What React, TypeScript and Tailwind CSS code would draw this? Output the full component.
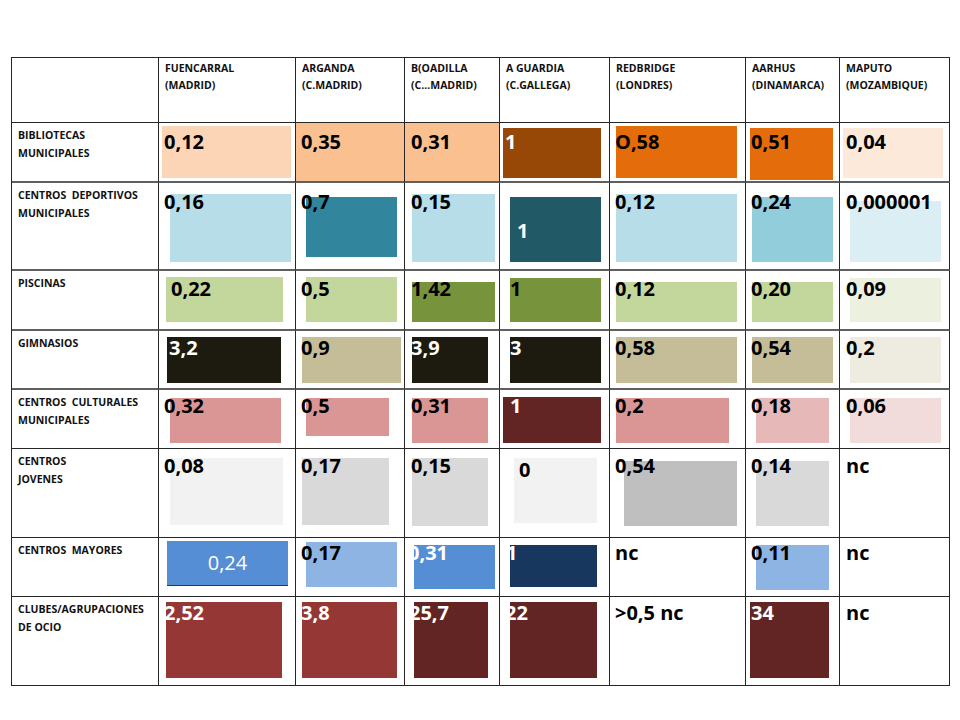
import React from 'react';

type Cell = {
  t: string;
  b?: string;
  w?: boolean;
  at?: string;
  centered?: boolean;
};

type Row = {
  label: string[];
  top: string;
  line: string;
  cells: Cell[];
};

const heads = [
  ['FUENCARRAL', '(MADRID)'],
  ['ARGANDA', '(C.MADRID)'],
  ['B(OADILLA', '(C…MADRID)'],
  ['A GUARDIA', '(C.GALLEGA)'],
  ['REDBRIDGE', '(LONDRES)'],
  ['AARHUS', '(DINAMARCA)'],
  ['MAPUTO', '(MOZAMBIQUE)'],
];

// default left offset of the number, per city column
const lefts = ['left-[5px]', 'left-[5px]', 'left-[6px]', 'left-[5px]', 'left-[5px]', 'left-[5px]', 'left-[6px]'];

const rows: Row[] = [
  {
    label: ['BIBLIOTECAS', 'MUNICIPALES'],
    top: 'top-[7px]',
    line: 'border-b-2 border-b-[#5f5f5f]',
    cells: [
      { t: '0,12', b: 'ml-[3px] mt-[3px] h-[52px] w-[129px] bg-[#fbd5b5]' },
      { t: '0,35', b: 'h-full w-full bg-[#fac090]' },
      { t: '0,31', b: 'h-full w-full bg-[#fac090]' },
      { t: '1', w: true, b: 'ml-[3px] mt-[5px] h-[50px] w-[98px] bg-[#974806]' },
      { t: 'O,58', b: 'ml-[6px] mt-[3px] h-[52px] w-[121px] bg-[#e46c0a]' },
      { t: '0,51', b: 'ml-[4px] mt-[5px] h-[52px] w-[83px] bg-[#e46c0a]' },
      { t: '0,04', b: 'ml-[3px] mt-[5px] h-[50px] w-[100px] bg-[#fde9d9]' },
    ],
  },
  {
    label: ['CENTROS\u00a0 DEPORTIVOS', 'MUNICIPALES'],
    top: 'top-[7px]',
    line: 'border-b-2 border-b-[#5f5f5f]',
    cells: [
      { t: '0,16', b: 'ml-[11px] mt-[11px] h-[68px] w-[121px] bg-[#b7dde8]' },
      { t: '0,7', b: 'ml-[10px] mt-[14px] h-[60px] w-[91px] bg-[#31859c]' },
      { t: '0,15', b: 'ml-[7px] mt-[11px] h-[68px] w-[83px] bg-[#b7dde8]' },
      { t: '1', w: true, at: 'left-[17px] top-[36px]', b: 'ml-[10px] mt-[14px] h-[65px] w-[91px] bg-[#215967]' },
      { t: '0,12', b: 'ml-[6px] mt-[11px] h-[68px] w-[121px] bg-[#b7dde8]' },
      { t: '0,24', b: 'ml-[6px] mt-[14px] h-[65px] w-[81px] bg-[#92cddc]' },
      { t: '0,000001', b: 'ml-[10px] mt-[18px] h-[61px] w-[91px] bg-[#daeef3]' },
    ],
  },
  {
    label: ['PISCINAS'],
    top: 'top-[6px]',
    line: 'border-b-2 border-b-[#5f5f5f]',
    cells: [
      { t: '0,22', at: 'left-[12px] top-[6px]', b: 'ml-[7px] mt-[6px] h-[45px] w-[117px] bg-[#c3d69b]' },
      { t: '0,5', b: 'ml-[10px] mt-[6px] h-[45px] w-[91px] bg-[#c3d69b]' },
      { t: '1,42', b: 'ml-[7px] mt-[11px] h-[40px] w-[83px] bg-[#77933c]' },
      { t: '1', at: 'left-[10px] top-[6px]', b: 'ml-[10px] mt-[7px] h-[44px] w-[91px] bg-[#77933c]' },
      { t: '0,12', b: 'ml-[6px] mt-[11px] h-[40px] w-[121px] bg-[#c3d69b]' },
      { t: '0,20', b: 'ml-[6px] mt-[11px] h-[40px] w-[81px] bg-[#c3d69b]' },
      { t: '0,09', b: 'ml-[10px] mt-[7px] h-[44px] w-[91px] bg-[#ebf1de]' },
    ],
  },
  {
    label: ['GIMNASIOS'],
    top: 'top-[5px]',
    line: 'border-b-2 border-b-[#5f5f5f]',
    cells: [
      { t: '3,2', w: true, at: 'left-[10px] top-[5px]', b: 'ml-[8px] mt-[6px] h-[46px] w-[114px] bg-[#1d1b10]' },
      { t: '0,9', b: 'ml-[6px] mt-[6px] h-[46px] w-[99px] bg-[#c4bd97]' },
      { t: '3,9', w: true, b: 'ml-[7px] mt-[6px] h-[46px] w-[76px] bg-[#1d1b10]' },
      { t: '3', w: true, at: 'left-[10px] top-[5px]', b: 'ml-[10px] mt-[6px] h-[46px] w-[91px] bg-[#1d1b10]' },
      { t: '0,58', b: 'ml-[6px] mt-[6px] h-[46px] w-[121px] bg-[#c4bd97]' },
      { t: '0,54', b: 'ml-[6px] mt-[6px] h-[46px] w-[81px] bg-[#c4bd97]' },
      { t: '0,2', b: 'ml-[10px] mt-[6px] h-[46px] w-[91px] bg-[#eeece1]' },
    ],
  },
  {
    label: ['CENTROS\u00a0 CULTURALES', 'MUNICIPALES'],
    top: 'top-[4px]',
    line: 'border-b border-b-[#262626]',
    cells: [
      { t: '0,32', b: 'ml-[11px] mt-[8px] h-[45px] w-[111px] bg-[#d99694]' },
      { t: '0,5', b: 'ml-[10px] mt-[8px] h-[38px] w-[83px] bg-[#d99694]' },
      { t: '0,31', b: 'ml-[7px] mt-[8px] h-[45px] w-[76px] bg-[#d99694]' },
      { t: '1', w: true, at: 'left-[10px] top-[4px]', b: 'ml-[3px] mt-[7px] h-[46px] w-[98px] bg-[#632523]' },
      { t: '0,2', b: 'ml-[6px] mt-[8px] h-[45px] w-[113px] bg-[#d99694]' },
      { t: '0,18', b: 'ml-[10px] mt-[8px] h-[45px] w-[73px] bg-[#e6b9b8]' },
      { t: '0,06', b: 'ml-[10px] mt-[8px] h-[45px] w-[91px] bg-[#f2dcdb]' },
    ],
  },
  {
    label: ['CENTROS', 'JOVENES'],
    top: 'top-[5px]',
    line: 'border-b border-b-[#262626]',
    cells: [
      { t: '0,08', b: 'ml-[11px] mt-[9px] h-[67px] w-[113px] bg-[#f2f2f2]' },
      { t: '0,17', b: 'ml-[6px] mt-[9px] h-[67px] w-[87px] bg-[#d9d9d9]' },
      { t: '0,15', b: 'ml-[7px] mt-[9px] h-[68px] w-[76px] bg-[#d9d9d9]' },
      { t: '0', at: 'left-[19px] top-[9px]', b: 'ml-[14px] mt-[9px] h-[65px] w-[83px] bg-[#f2f2f2]' },
      { t: '0,54', b: 'ml-[14px] mt-[12px] h-[65px] w-[113px] bg-[#bfbfbf]' },
      { t: '0,14', b: 'ml-[10px] mt-[12px] h-[65px] w-[73px] bg-[#d9d9d9]' },
      { t: 'nc' },
    ],
  },
  {
    label: ['CENTROS\u00a0 MAYORES'],
    top: 'top-[3px]',
    line: 'border-b border-b-[#262626]',
    cells: [
      { t: '0,24', centered: true, b: 'ml-[8px] mt-[3px] h-[45px] w-[121px] border-b border-[#1f3864] bg-[#558ed5]' },
      { t: '0,17', b: 'ml-[10px] mt-[4px] h-[45px] w-[91px] bg-[#8eb4e3]' },
      { t: '0,31', w: true, at: 'left-[3px] top-[3px]', b: 'ml-[9px] mt-[7px] h-[44px] w-[81px] bg-[#558ed5]' },
      { t: '1', w: true, at: 'left-[6px] top-[3px]', b: 'ml-[10px] mt-[7px] h-[42px] w-[87px] bg-[#17375e]' },
      { t: 'nc' },
      { t: '0,11', b: 'ml-[10px] mt-[7px] h-[45px] w-[73px] bg-[#8eb4e3]' },
      { t: 'nc' },
    ],
  },
  {
    label: ['CLUBES/AGRUPACIONES', 'DE OCIO'],
    top: 'top-[4px]',
    line: 'border-b border-b-[#262626]',
    cells: [
      { t: '2,52', w: true, b: 'ml-[7px] mt-[5px] h-[76px] w-[116px] bg-[#953735]' },
      { t: '3,8', w: true, b: 'ml-[6px] mt-[5px] h-[76px] w-[95px] bg-[#953735]' },
      { t: '25,7', w: true, at: 'left-[4px] top-[4px]', b: 'ml-[9px] mt-[5px] h-[76px] w-[74px] bg-[#632523]' },
      { t: '22', w: true, b: 'ml-[10px] mt-[5px] h-[76px] w-[87px] bg-[#632523]' },
      { t: '>0,5 nc' },
      { t: '34', w: true, b: 'ml-[4px] mt-[5px] h-[76px] w-[79px] bg-[#632523]' },
      { t: 'nc' },
    ],
  },
];

function Value({ cell, pos, line }: { cell: Cell; pos: string; line: string }) {
  return (
    <div className={`relative overflow-hidden border-r border-[#262626] ${line}`}>
      {cell.b &&
        (cell.centered ? (
          <div className={`flex items-center justify-center text-[20px] leading-[24px] text-white ${cell.b}`}>
            {cell.t}
          </div>
        ) : (
          <div className={cell.b} />
        ))}
      {!cell.centered && (
        <span
          className={`absolute whitespace-nowrap text-[20px] font-bold leading-[24px] ${cell.at ?? pos} ${
            cell.w ? 'text-white' : 'text-black'
          }`}
        >
          {cell.t}
        </span>
      )}
    </div>
  );
}

export default function App() {
  return (
    <div className="h-[720px] w-[960px] bg-white pl-[11px] pt-[57px] font-['Open_Sans',sans-serif] text-black">
      <div className="grid w-fit grid-cols-[147px_137px_109px_95px_110px_136px_94px_110px] grid-rows-[65px_60px_88px_60px_59px_59px_89px_59px_89px] border-l border-t border-[#262626]">
        <div className="border-b border-r border-[#262626]" />
        {heads.map((h) => (
          <div
            key={h[0]}
            className="border-b border-r border-[#262626] pl-[6px] pt-[2px] text-[10.5px] font-bold leading-[17px] text-[#111]"
          >
            {h.map((l) => (
              <div key={l} className="whitespace-nowrap">
                {l}
              </div>
            ))}
          </div>
        ))}

        {rows.map((row) => (
          <React.Fragment key={row.label.join(' ')}>
            <div
              className={`border-r border-[#262626] pl-[6px] pt-[3px] text-[10.5px] font-bold leading-[18px] text-[#111] ${row.line}`}
            >
              {row.label.map((l) => (
                <div key={l} className="whitespace-pre">
                  {l}
                </div>
              ))}
            </div>
            {row.cells.map((c, i) => (
              <Value key={i} cell={c} pos={`${lefts[i]} ${row.top}`} line={row.line} />
            ))}
          </React.Fragment>
        ))}
      </div>
    </div>
  );
}
